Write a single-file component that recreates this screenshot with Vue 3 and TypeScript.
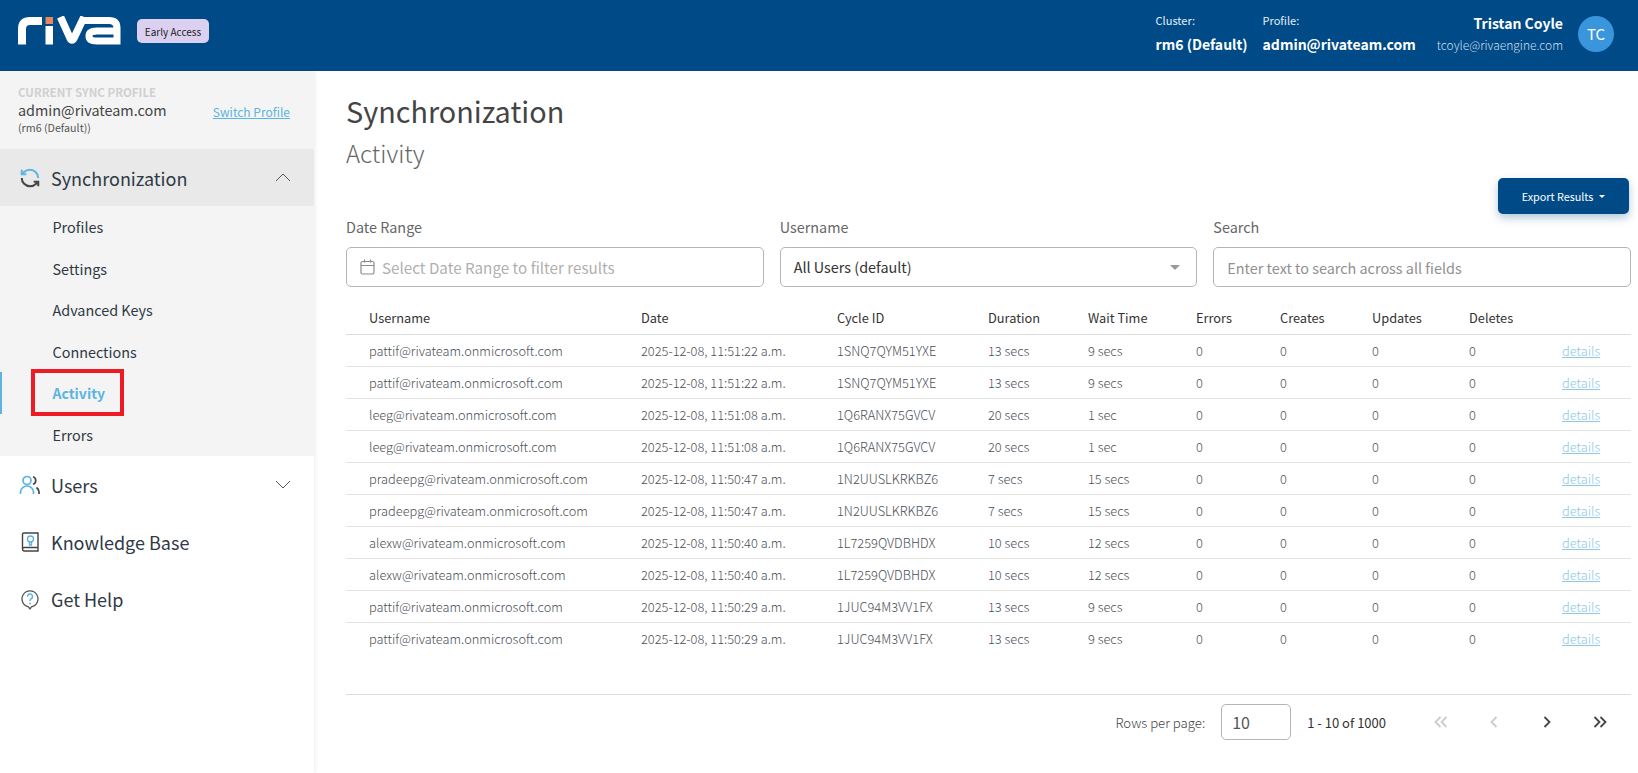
<template>
    <div class="app">
        <header class="topbar">
            <div class="brand">
                <svg class="logo" width="104" height="30" viewBox="0 0 104 30" fill="none">
                    <path d="M5 28.500V13Q5 5 13 5H25" stroke="#fff" stroke-width="8" />
                    <rect x="28.500" y="1" width="7.500" height="7" fill="#e8875a" />
                    <rect x="28.500" y="10" width="7.500" height="18.500" fill="#fff" />
                    <path d="M43.500 1L53 22Q55 26 57 22L67 1" stroke="#fff" stroke-width="7.500" />
                    <path d="M66 4.500H92Q100 4.500 100 12V25H80Q72 25 72 20T80 15H99" stroke="#fff" stroke-width="7" />
                </svg>
                <span class="badge">Early Access</span>
            </div>
            <div class="top-right">
                <div class="top-field cluster">
                    <span class="top-label">Cluster:</span>
                    <span class="top-value">rm6 (Default)</span>
                </div>
                <div class="top-field profile">
                    <span class="top-label">Profile:</span>
                    <span class="top-value">admin@rivateam.com</span>
                </div>
                <div class="user">
                    <span class="user-name">Tristan Coyle</span>
                    <span class="user-mail">tcoyle@rivaengine.com</span>
                </div>
                <div class="avatar">TC</div>
            </div>
        </header>

        <div class="body">
            <aside class="sidebar">
                <div class="sync-profile">
                    <div>
                        <div class="sync-title">CURRENT SYNC PROFILE</div>
                        <div class="sync-mail">admin@rivateam.com</div>
                        <div class="sync-cluster">(rm6 (Default))</div>
                    </div>
                    <a class="switch">Switch Profile</a>
                </div>

                <div class="group-open">
                    <div class="nav-item head">
                        <svg width="22" height="22" viewBox="0 0 24 24" fill="none" stroke-width="2.200">
                            <path d="M21 12a9 9 0 0 0-9-9 9.750 9.750 0 0 0-6.740 2.740L3 8" stroke="#5bb5e0" />
                            <path d="M3 3v5h5" stroke="#5bb5e0" />
                            <path d="M3 12a9 9 0 0 0 9 9 9.750 9.750 0 0 0 6.740-2.740L21 16" stroke="#444" />
                            <path d="M16 16h5v5" stroke="#444" />
                        </svg>
                        <span>Synchronization</span>
                        <svg class="chev" width="16" height="9" viewBox="0 0 16 9" fill="none" stroke="#555" stroke-width="1">
                            <path d="M1 8L8 1L15 8" />
                        </svg>
                    </div>
                    <div
                        v-for="item in subItems"
                        :key="item"
                        class="sub-item"
                        :class="{ active: item === 'Activity' }"
                    >
                        <span>{{ item }}</span>
                    </div>
                </div>

                <div class="nav-item users">
                    <svg width="22" height="22" viewBox="0 0 22 22" fill="none" stroke-width="1.700">
                        <circle cx="8" cy="6.500" r="4" stroke="#5bb5e0" />
                        <path d="M1.500 20V18A6.500 6 0 0 1 14.500 18V20" stroke="#5bb5e0" />
                        <path d="M14 2.700A4 4 0 0 1 14 10.300" stroke="#444" />
                        <path d="M17.500 13.500A6 6 0 0 1 20 18V20" stroke="#444" />
                    </svg>
                    <span>Users</span>
                    <svg class="chev" width="16" height="9" viewBox="0 0 16 9" fill="none" stroke="#555" stroke-width="1">
                        <path d="M1 1L8 8L15 1" />
                    </svg>
                </div>
                <div class="nav-item">
                    <svg width="22" height="22" viewBox="0 0 22 22" fill="none" stroke-width="1.400">
                        <path d="M3.500 18V3.500A1.500 1.500 0 0 1 5 2H19V20H5A2 2 0 0 1 3.500 18Q3.500 16.500 5 16.500H19" stroke="#444" />
                        <circle cx="11.500" cy="8" r="3" stroke="#5bb5e0" />
                        <path d="M10.500 11V14H12.500V11" stroke="#5bb5e0" />
                    </svg>
                    <span>Knowledge Base</span>
                </div>
                <div class="nav-item">
                    <svg width="22" height="22" viewBox="0 0 22 22" fill="none" stroke-width="1.300">
                        <path d="M9.500 18.800A8 8 0 1 1 12.500 18.800L11 20.800Z" stroke="#555" />
                        <path d="M8.500 8.500A2.500 2.500 0 1 1 12 10.800Q11 11.500 11 13" stroke="#5bb5e0" stroke-width="1.500" />
                        <circle cx="11" cy="15.500" r="0.900" fill="#5bb5e0" />
                    </svg>
                    <span>Get Help</span>
                </div>
            </aside>

            <main class="content">
                <h1>Synchronization</h1>
                <h2>Activity</h2>

                <div class="export-row">
                    <button class="export">Export Results<i class="caret"></i></button>
                </div>

                <div class="filters">
                    <div class="filter">
                        <label>Date Range</label>
                        <div class="field date">
                            <svg width="15" height="16" viewBox="0 0 15 16" fill="none" stroke="#8a8a8a" stroke-width="1.200">
                                <rect x="1" y="2.500" width="13" height="12.500" rx="1.500" />
                                <path d="M1 6.500H14M4.500 0.500V3.500M10.500 0.500V3.500" />
                            </svg>
                            <span class="placeholder big">Select Date Range to filter results</span>
                        </div>
                    </div>
                    <div class="filter">
                        <label>Username</label>
                        <div class="field select">
                            <span>All Users (default)</span>
                            <i class="select-caret"></i>
                        </div>
                    </div>
                    <div class="filter">
                        <label>Search</label>
                        <div class="field">
                            <span class="placeholder">Enter text to search across all fields</span>
                        </div>
                    </div>
                </div>

                <table class="grid">
                    <colgroup>
                        <col v-for="(w, i) in colWidths" :key="i" :style="{ width: w + 'px' }" />
                    </colgroup>
                    <thead>
                        <tr>
                            <th v-for="h in headers" :key="h">{{ h }}</th>
                        </tr>
                    </thead>
                    <tbody>
                        <tr v-for="(row, i) in rows" :key="i">
                            <td>{{ row.user }}</td>
                            <td>{{ row.date }}</td>
                            <td>{{ row.cycle }}</td>
                            <td>{{ row.duration }}</td>
                            <td>{{ row.wait }}</td>
                            <td>0</td>
                            <td>0</td>
                            <td>0</td>
                            <td>0</td>
                            <td class="details"><a>details</a></td>
                        </tr>
                    </tbody>
                </table>

                <div class="pager">
                    <span class="rows-label">Rows per page:</span>
                    <div class="rows-input">10</div>
                    <span class="range">1 - 10 of 1000</span>
                    <div class="pager-btns">
                        <svg width="14" height="12" viewBox="0 0 14 12" fill="none" stroke="#ccc" stroke-width="1.800">
                            <path d="M6.500 1L1.500 6L6.500 11M12.500 1L7.500 6L12.500 11" />
                        </svg>
                        <svg width="14" height="12" viewBox="0 0 14 12" fill="none" stroke="#ccc" stroke-width="1.800">
                            <path d="M9.500 1L4.500 6L9.500 11" />
                        </svg>
                        <svg width="14" height="12" viewBox="0 0 14 12" fill="none" stroke="#444" stroke-width="1.800">
                            <path d="M4.500 1L9.500 6L4.500 11" />
                        </svg>
                        <svg width="14" height="12" viewBox="0 0 14 12" fill="none" stroke="#444" stroke-width="1.800">
                            <path d="M1.500 1L6.500 6L1.500 11M7.500 1L12.500 6L7.500 11" />
                        </svg>
                    </div>
                </div>
            </main>
        </div>
    </div>
</template>

<script setup lang="ts">
interface ActivityRow {
    user: string
    date: string
    cycle: string
    duration: string
    wait: string
}

const subItems = ['Profiles', 'Settings', 'Advanced Keys', 'Connections', 'Activity', 'Errors']
const headers = ['Username', 'Date', 'Cycle ID', 'Duration', 'Wait Time', 'Errors', 'Creates', 'Updates', 'Deletes', '']
const colWidths = [295, 196, 151, 100, 108, 84, 92, 97, 93, 69]

const twice = (row: ActivityRow) => [row, row]

const rows: ActivityRow[] = [
    ...twice({ user: 'pattif@rivateam.onmicrosoft.com', date: '2025-12-08, 11:51:22 a.m.', cycle: '1SNQ7QYM51YXE', duration: '13 secs', wait: '9 secs' }),
    ...twice({ user: 'leeg@rivateam.onmicrosoft.com', date: '2025-12-08, 11:51:08 a.m.', cycle: '1Q6RANX75GVCV', duration: '20 secs', wait: '1 sec' }),
    ...twice({ user: 'pradeepg@rivateam.onmicrosoft.com', date: '2025-12-08, 11:50:47 a.m.', cycle: '1N2UUSLKRKBZ6', duration: '7 secs', wait: '15 secs' }),
    ...twice({ user: 'alexw@rivateam.onmicrosoft.com', date: '2025-12-08, 11:50:40 a.m.', cycle: '1L7259QVDBHDX', duration: '10 secs', wait: '12 secs' }),
    ...twice({ user: 'pattif@rivateam.onmicrosoft.com', date: '2025-12-08, 11:50:29 a.m.', cycle: '1JUC94M3VV1FX', duration: '13 secs', wait: '9 secs' }),
]
</script>

<style scoped>
.app {
    height: 773px;
    overflow: hidden;
    display: flex;
    flex-direction: column;
    background: #fff;
    color: #333;
    font-family: "Noto Sans CJK SC", "Noto Sans", sans-serif;
}

.topbar {
    height: 71px;
    flex: none;
    display: flex;
    align-items: center;
    justify-content: space-between;
    background: #004b87;
    color: #fff;
}

.brand {
    display: flex;
    align-items: center;
    padding-left: 17px;
}

.logo {
    margin-top: -10px;
}

.badge {
    width: 72px;
    height: 24px;
    margin-left: 16px;
    margin-top: -9px;
    display: flex;
    align-items: center;
    justify-content: center;
    border-radius: 5px;
    background: #dcd0f0;
    color: #222;
    font-size: 10px;
}

.top-right {
    display: flex;
    align-items: center;
    height: 100%;
}

.top-field {
    display: flex;
    flex-direction: column;
    gap: 6px;
    margin-top: -5px;
}

.cluster {
    width: 107px;
}

.top-label {
    font-size: 11px;
    line-height: 16px;
    color: #e4eef6;
}

.top-value {
    font-size: 14px;
    line-height: 20px;
    font-weight: 700;
}

.user {
    margin-left: 21px;
    text-align: right;
    display: flex;
    flex-direction: column;
    gap: 4px;
    margin-top: -5px;
}

.user-name {
    font-size: 14px;
    line-height: 20px;
    font-weight: 700;
}

.user-mail {
    font-size: 12px;
    line-height: 16px;
    font-weight: 300;
    color: #cfdfec;
}

.avatar {
    width: 36px;
    height: 36px;
    margin: -4px 24px 0 15px;
    display: flex;
    align-items: center;
    justify-content: center;
    border-radius: 50%;
    background: #3a96dc;
    font-size: 15px;
}

.body {
    flex: 1;
    display: flex;
    min-height: 0;
}

.sidebar {
    width: 314px;
    flex: none;
    box-shadow: 1px 0 4px rgba(0, 0, 0, 0.08);
    color: #2f3a45;
}

.sync-profile {
    height: 78px;
    box-sizing: border-box;
    padding: 14px 24px 0 18px;
    display: flex;
    justify-content: space-between;
    background: #f4f4f4;
}

.sync-title {
    font-size: 11.500px;
    line-height: 15px;
    font-weight: 700;
    color: #d0d0d0;
}

.sync-mail {
    font-size: 14.400px;
    line-height: 20px;
    color: #444;
}

.sync-cluster {
    font-size: 10.700px;
    line-height: 15px;
    color: #555;
}

.switch {
    margin-top: 18px;
    font-size: 12px;
    line-height: 18px;
    height: 18px;
    color: #5bb5e0;
    text-decoration: underline;
}

.group-open {
    background: #f4f4f4;
    height: 307px;
}

.nav-item {
    display: flex;
    align-items: center;
    gap: 10px;
    height: 57px;
    padding: 0 23px 0 19px;
    font-size: 18px;
    color: #2f3a45;
}

.nav-item .chev {
    margin-left: auto;
}

.head {
    background: #e9e9e9;
}

.sub-item {
    height: 41.500px;
    display: flex;
    align-items: center;
    padding-left: 52.500px;
    font-size: 14.400px;
    color: #2f3a45;
    position: relative;
}

.sub-item.active {
    color: #5bb5e0;
    font-size: 14px;
    font-weight: 700;
}

.sub-item.active::before {
    content: "";
    position: absolute;
    left: 0;
    top: 0;
    bottom: 0;
    width: 1.500px;
    background: #5bb5e0;
}

.sub-item.active::after {
    content: "";
    position: absolute;
    left: 31px;
    top: -3px;
    width: 93px;
    height: 47px;
    box-sizing: border-box;
    border: 4px solid #ed1c24;
}

.content {
    flex: 1;
    min-width: 0;
    padding: 0 7px 0 32px;
}

h1 {
    margin: 18px 0 0;
    font-size: 28.800px;
    line-height: 44px;
    font-weight: 400;
    color: #444;
}

h2 {
    margin: 0;
    font-size: 24px;
    line-height: 40px;
    font-weight: 300;
    color: #666;
}

.export-row {
    display: flex;
    justify-content: flex-end;
    margin-top: 5px;
    padding-right: 2px;
}

.export {
    width: 131px;
    height: 36px;
    border: none;
    border-radius: 5px;
    background: #004b87;
    color: #fff;
    font: inherit;
    font-size: 10.800px;
    box-shadow: 0 4px 8px rgba(0, 75, 135, 0.3);
    display: flex;
    align-items: center;
    justify-content: center;
    gap: 6px;
}

.caret {
    border-left: 3.500px solid transparent;
    border-right: 3.500px solid transparent;
    border-top: 3.500px solid #fff;
}

.filters {
    display: grid;
    grid-template-columns: repeat(3, 1fr);
    gap: 16px;
    margin-top: 2px;
}

.filter {
    display: flex;
    flex-direction: column;
}

.filter label {
    font-size: 14.400px;
    line-height: 22px;
    color: #666;
    margin-bottom: 9px;
}

.field {
    height: 40px;
    box-sizing: border-box;
    border: 1px solid #b5b5b5;
    border-radius: 5px;
    display: flex;
    align-items: center;
    padding: 0 13px;
    font-size: 14.400px;
    color: #333;
}

.date {
    gap: 7px;
}

.select {
    justify-content: space-between;
}

.select span {
    margin-top: -2px;
}

.placeholder {
    color: #909090;
}

.placeholder.big {
    font-size: 15.200px;
    color: #b0b0b0;
}

.select-caret {
    border-left: 5px solid transparent;
    border-right: 5px solid transparent;
    border-top: 5px solid #999;
    margin-right: 3px;
}

.grid {
    width: 100%;
    margin-top: 16px;
    table-layout: fixed;
    border-collapse: collapse;
    font-size: 12.800px;
}

.grid th {
    height: 31px;
    box-sizing: border-box;
    text-align: left;
    font-weight: 400;
    color: #333;
    padding: 0 0 2px;
    border-bottom: 1px solid #ddd;
}

.grid td {
    height: 32px;
    box-sizing: border-box;
    padding: 0;
    font-weight: 300;
    color: #4a5058;
    border-bottom: 1px solid #e4e4e4;
    white-space: nowrap;
}

.grid th:first-child,
.grid td:first-child {
    padding-left: 23px;
}

.grid tr:last-child td {
    border-bottom: none;
}

.details a {
    color: #8cc8e8;
    text-decoration: underline;
}

.pager {
    margin-top: 40px;
    padding: 9px 24px 0 0;
    border-top: 1px solid #ddd;
    display: flex;
    align-items: center;
    justify-content: flex-end;
    font-size: 13px;
}

.rows-label {
    font-size: 13.200px;
    font-weight: 300;
    color: #444;
    white-space: nowrap;
}

.rows-input {
    width: 70px;
    height: 36px;
    margin-left: 16px;
    box-sizing: border-box;
    border: 1px solid #b5b5b5;
    border-radius: 5px;
    display: flex;
    align-items: center;
    padding-left: 10px;
    font-size: 16px;
    color: #555;
}

.range {
    margin-left: 16px;
    color: #333;
}

.pager-btns {
    margin-left: 48px;
    display: flex;
    gap: 39px;
}
</style>

<style>
html,
body {
    margin: 0;
    background: #fff;
}
</style>
